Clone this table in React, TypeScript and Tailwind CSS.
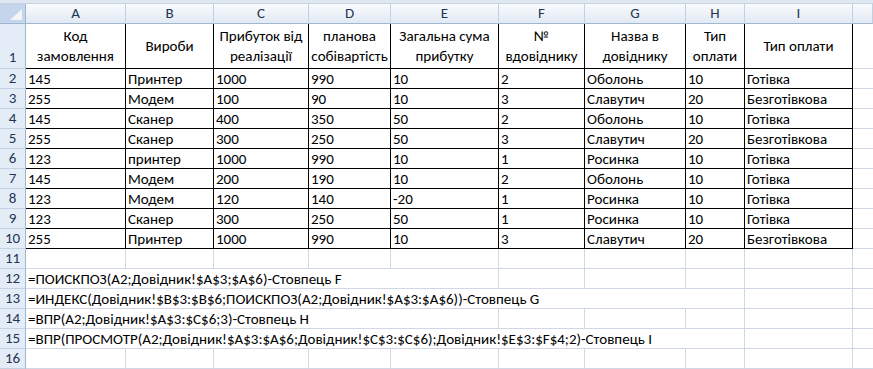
import React from "react";

const headers = [
  ["Код", "замовлення"],
  ["Вироби"],
  ["Прибуток від", "реалізації"],
  ["планова", "собівартість"],
  ["Загальна сума", "прибутку"],
  ["№", "вдовіднику"],
  ["Назва в", "довіднику"],
  ["Тип", "оплати"],
  ["Тип оплати"],
];

const rows = [
  ["145", "Принтер", "1000", "990", "10", "2", "Оболонь", "10", "Готівка"],
  ["255", "Модем", "100", "90", "10", "3", "Славутич", "20", "Безготівкова"],
  ["145", "Сканер", "400", "350", "50", "2", "Оболонь", "10", "Готівка"],
  ["255", "Сканер", "300", "250", "50", "3", "Славутич", "20", "Безготівкова"],
  ["123", "принтер", "1000", "990", "10", "1", "Росинка", "10", "Готівка"],
  ["145", "Модем", "200", "190", "10", "2", "Оболонь", "10", "Готівка"],
  ["123", "Модем", "120", "140", "-20", "1", "Росинка", "10", "Готівка"],
  ["123", "Сканер", "300", "250", "50", "1", "Росинка", "10", "Готівка"],
  ["255", "Принтер", "1000", "990", "10", "3", "Славутич", "20", "Безготівкова"],
];

const letters = ["A", "B", "C", "D", "E", "F", "G", "H", "I", ""];

// formula rows: text, how many columns it overflows across, empty cells after it
const formulas: { n: number; text: string; span: string; rest: number }[] = [
  { n: 12, text: "=ПОИСКПОЗ(A2;Довідник!$A$3;$A$6)-Стовпець F", span: "col-span-5", rest: 5 },
  { n: 13, text: "=ИНДЕКС(Довідник!$B$3:$B$6;ПОИСКПОЗ(A2;Довідник!$A$3:$A$6))-Стовпець G", span: "col-span-8", rest: 2 },
  { n: 14, text: "=ВПР(A2;Довідник!$A$3:$C$6;3)-Стовпець H", span: "col-span-5", rest: 5 },
  { n: 15, text: "=ВПР(ПРОСМОТР(A2;Довідник!$A$3:$A$6;Довідник!$C$3:$C$6);Довідник!$E$3:$F$4;2)-Стовпець I", span: "col-span-8", rest: 2 },
];

function RowHead({ n, tall }: { n: number; tall?: boolean }) {
  return (
    <div
      className={`flex justify-center bg-[#e4ecf7] border-r border-b border-r-[#9eb6ce] border-b-[#c3d2e3] text-[#1f3552] ${
        tall ? "items-end h-[45px] pb-[1px]" : "items-center h-[20px]"
      }`}
    >
      {n}
    </div>
  );
}

function Grid() {
  return <div className="h-[20px] border-r border-b border-[#d0d7e5]" />;
}

export default function App() {
  return (
    <div
      className="w-[873px] h-[369px] overflow-hidden bg-white text-[15px] leading-[19px] text-black"
      style={{ fontFamily: "Carlito, Lato, 'Liberation Sans', sans-serif" }}
    >
      <div className="h-[4px] bg-[#dfe7f2] border-b border-[#c7d4e4]" />
      <div className="grid grid-cols-[26px_100px_88px_95px_82px_108px_86px_101px_59px_108px_1fr]">
        {/* column headers */}
        <div className="relative h-[20px] bg-[#c5d6ec] border-r border-b border-[#9eb6ce]">
          <div className="absolute right-[3px] bottom-[3px] w-0 h-0 border-l-[12px] border-l-transparent border-b-[11px] border-b-[#f2f6fb]" />
        </div>
        {letters.map((l, i) => (
          <div
            key={i}
            className="h-[20px] flex items-center justify-center bg-gradient-to-b from-[#f9fbfd] to-[#e2e9f3] border-r border-b border-r-[#c3d0e0] border-b-[#9eb6ce] text-[#1f3552]"
          >
            {l}
          </div>
        ))}

        {/* row 1: headings */}
        <RowHead n={1} tall />
        {headers.map((h, i) => (
          <div
            key={i}
            className="h-[45px] flex flex-col items-center justify-center text-center leading-[20px] border-r border-b border-black"
          >
            {h.map((line, j) => (
              <span key={j} className="whitespace-nowrap">
                {line}
              </span>
            ))}
          </div>
        ))}
        <div className="h-[45px] border-b border-[#d0d7e5]" />

        {/* data */}
        {rows.map((r, ri) => (
          <React.Fragment key={ri}>
            <RowHead n={ri + 2} />
            {r.map((v, ci) => (
              <div
                key={ci}
                className="h-[20px] flex items-center pl-[2px] pt-[1px] whitespace-nowrap overflow-hidden border-r border-b border-black"
              >
                {v}
              </div>
            ))}
            <div className="h-[20px] border-b border-[#d0d7e5]" />
          </React.Fragment>
        ))}

        {/* row 11 */}
        <RowHead n={11} />
        {Array.from({ length: 9 }).map((_, i) => (
          <Grid key={i} />
        ))}
        <div className="h-[20px] border-b border-[#d0d7e5]" />

        {/* formulas */}
        {formulas.map((f) => (
          <React.Fragment key={f.n}>
            <RowHead n={f.n} />
            <div
              className={`${f.span} h-[20px] flex items-center pl-[2px] pt-[1px] whitespace-nowrap border-r border-b border-[#d0d7e5]`}
            >
              {f.text}
            </div>
            {Array.from({ length: f.rest - 1 }).map((_, i) => (
              <Grid key={i} />
            ))}
            <div className="h-[20px] border-b border-[#d0d7e5]" />
          </React.Fragment>
        ))}

        {/* row 16 */}
        <RowHead n={16} />
        {Array.from({ length: 9 }).map((_, i) => (
          <Grid key={i} />
        ))}
        <div className="h-[20px] border-b border-[#d0d7e5]" />
      </div>
    </div>
  );
}
